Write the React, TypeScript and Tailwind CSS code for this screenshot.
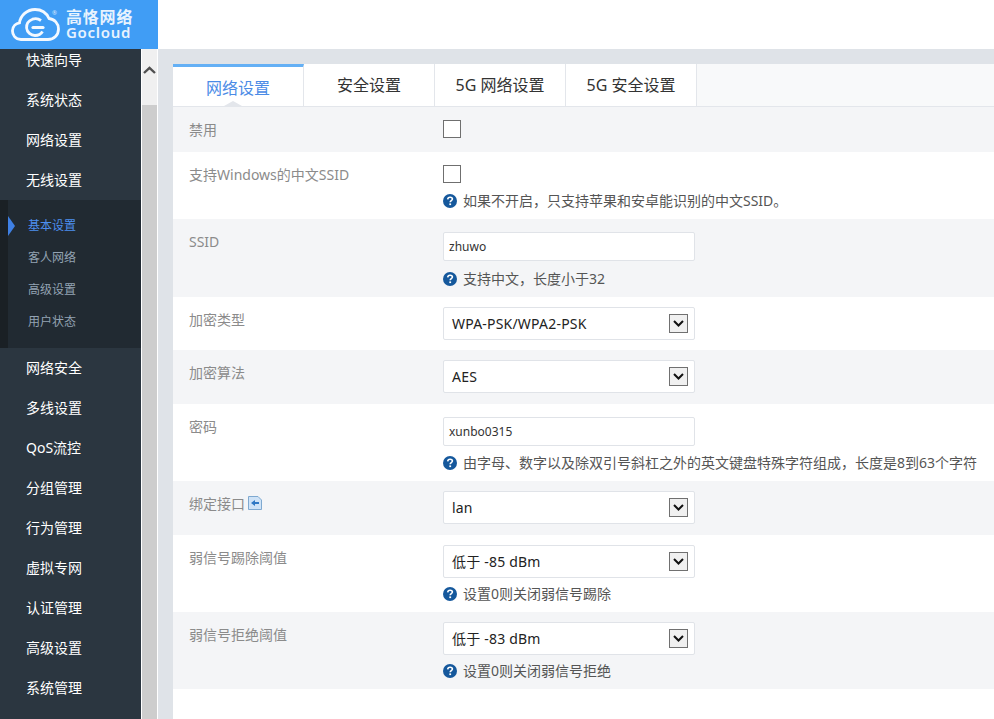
import type { ReactNode } from "react";

const font = "font-['Noto_Sans','Noto_Sans_CJK_SC',sans-serif]";

const topMenu = ["快速向导", "系统状态", "网络设置", "无线设置"];
const subMenu = ["基本设置", "客人网络", "高级设置", "用户状态"];
const bottomMenu = ["网络安全", "多线设置", "QoS流控", "分组管理", "行为管理", "虚拟专网", "认证管理", "高级设置", "系统管理"];
const tabs = ["网络设置", "安全设置", "5G 网络设置", "5G 安全设置"];

function Logo() {
  return (
    <div className="relative flex h-[49px] w-[158px] shrink-0 items-center bg-[#409df5] pl-[11px]">
      <svg width="49" height="33" viewBox="0 0 49 33" fill="none" stroke="#f4f9ff">
        <path d="M10 31.5 C4 31.5 1.3 26.5 1.5 22.5 C1.7 18 5 15.3 8.5 14.8 C9.5 7.5 16 1.5 24 1.5 C31.5 1.5 36 6 38 10.5 C43.5 11 47.5 15.5 47.5 21 C47.5 27 43 31.5 37 31.5 Z" strokeWidth="2.8" />
        <path d="M30 12.5 C27.5 10.7 24.5 10.2 21.5 11.2 C17.5 12.7 15.3 16 15.6 20 C16 24.5 20 27.5 24 27.5 C27.5 27.5 30.2 25.8 31.5 23.5" strokeWidth="2.8" />
        <path d="M22 19.5 H32" strokeWidth="3.2" strokeLinecap="round" />
      </svg>
      <span className="absolute top-[9px] left-[52px] text-[6px] leading-[8px] text-[#d5e8fc]">®</span>
      <div className="ml-[6px] flex flex-col text-[#e8f3fe]">
        <span className="text-[16px] leading-[16px] font-bold tracking-[0.8px]">高恪网络</span>
        <span className="text-[15px] leading-[15px] font-semibold tracking-[0.7px]">Gocloud</span>
      </div>
    </div>
  );
}

function MenuItem({ label }: { label: string }) {
  return <div className="flex h-10 items-center pb-[2px] pl-[26px] text-[14px] text-white">{label}</div>;
}

function Sidebar() {
  return (
    <div className="flex w-[158px] shrink-0 flex-col">
      <Logo />
      <div className="flex min-h-0 flex-1">
        <div className="w-[141px] overflow-hidden bg-[#2b3640]">
          <div className="-mt-[9px]">
            {topMenu.map((m) => (
              <MenuItem key={m} label={m} />
            ))}
            <div className="flex h-[148px] bg-[#212a32]">
              <div className="w-2 bg-[#1a2025]" />
              <div className="relative flex-1 py-[10px]">
                <div className="absolute top-[16px] left-0 h-0 w-0 border-y-[10px] border-l-[7px] border-y-transparent border-l-[#3f80e4]" />
                {subMenu.map((m, i) => (
                  <div key={m} className={`flex h-8 items-center pl-5 text-xs ${i === 0 ? "text-[#4d8fef]" : "text-[#93a3b3]"}`}>
                    {m}
                  </div>
                ))}
              </div>
            </div>
            {bottomMenu.map((m) => (
              <MenuItem key={m} label={m} />
            ))}
          </div>
        </div>
        <div className="ml-px flex w-[15px] flex-col bg-[#cdcdcd]">
          <div className="flex h-[56px] justify-center bg-[#f0f0f0] pt-[17px]">
            <svg width="13" height="8" viewBox="0 0 13 8" fill="none" stroke="#505050" strokeWidth="2.4">
              <path d="M1 7 L6.5 1.8 L12 7" />
            </svg>
          </div>
        </div>
        <div className="w-px bg-white" />
      </div>
    </div>
  );
}

function Help({ gap, children }: { gap: string; children: ReactNode }) {
  return (
    <div className={`flex h-[18px] items-center text-[14px] whitespace-nowrap text-[#555] ${gap}`}>
      <svg width="14" height="14" viewBox="0 0 14 14" className="mr-[6px] shrink-0">
        <circle cx="7" cy="7" r="7" fill="#15589c" />
        <path d="M4.7 5.4 C4.8 3.9 5.8 3.2 7.1 3.2 C8.4 3.2 9.4 4 9.4 5.1 C9.4 6.6 7.2 6.7 7.2 8.3" fill="none" stroke="white" strokeWidth="1.6" />
        <rect x="6.3" y="9.4" width="1.8" height="1.7" fill="white" />
      </svg>
      <span className="pb-[2px]">{children}</span>
    </div>
  );
}

function Checkbox() {
  return <div className="h-[18px] w-[18px] border border-[#6f6f6f] bg-white" />;
}

function TextInput({ value }: { value: string }) {
  return (
    <div className="flex h-[29px] w-[252px] items-center rounded-[2px] border border-[#e0e3e8] bg-white pl-[5px] text-xs text-[#333]">
      {value}
    </div>
  );
}

function Select({ value }: { value: string }) {
  return (
    <div className="flex h-[33px] w-[252px] items-center justify-between rounded-[2px] border border-[#e0e3e8] bg-white pr-[6px] pl-2 text-[14px] tracking-[0.2px] text-[#222]">
      <span>{value}</span>
      <div className="flex h-[19px] w-[19px] items-center justify-center border border-[#707070] bg-[#f0f0f0]">
        <svg width="11" height="7" viewBox="0 0 11 7" fill="none" stroke="#111" strokeWidth="2">
          <path d="M1 1 L5.5 5.5 L10 1" />
        </svg>
      </div>
    </div>
  );
}

function Row({ label, height, top, gray, extra, children }: { label: string; height: string; top: string; gray?: boolean; extra?: ReactNode; children: ReactNode }) {
  return (
    <div className={`flex pl-4 ${height} ${gray ? "bg-[#f4f5f7]" : "bg-white"}`}>
      <div className="mt-[13px] flex h-[18px] w-[254px] shrink-0 items-center text-[14px] text-[#8b8b8b]">
        {label}
        {extra}
      </div>
      <div className={`flex flex-col ${top}`}>{children}</div>
    </div>
  );
}

export default function App() {
  return (
    <div className={`flex h-screen w-full overflow-hidden bg-white ${font}`}>
      <Sidebar />
      <div className="flex min-w-0 flex-1 flex-col">
        <div className="h-[49px] shrink-0 bg-white" />
        <div className="flex min-h-0 flex-1 flex-col bg-[#dfe3e8] pt-[15px] pl-[15px]">
          <div className="flex h-[43px] shrink-0 border-b border-[#e3e6eb] bg-[#f8f9fa]">
            {tabs.map((t, i) => (
              <div
                key={t}
                className={`relative flex w-[131px] items-center justify-center border-r border-[#e3e6eb] bg-white text-[16px] ${
                  i === 0 ? "border-t-[3px] border-t-[#64b0f5] pt-[2px] text-[#4a8be6]" : "pb-[1px] text-[#333]"
                }`}
              >
                {t}
                {i === 0 && <div className="absolute bottom-0 left-[51px] h-0 w-0 border-x-[9px] border-b-[5px] border-x-transparent border-b-[#e3e6eb]" />}
              </div>
            ))}
          </div>
          <div className="flex-1 bg-white">
            <Row label="禁用" height="h-[45px]" top="pt-[13px]" gray>
              <Checkbox />
            </Row>
            <Row label="支持Windows的中文SSID" height="h-[67px]" top="pt-[13px]">
              <Checkbox />
              <Help gap="mt-[9px]">如果不开启，只支持苹果和安卓能识别的中文SSID。</Help>
            </Row>
            <Row label="SSID" height="h-[78px]" top="pt-[13px]" gray>
              <TextInput value="zhuwo" />
              <Help gap="mt-[9px]">支持中文，长度小于32</Help>
            </Row>
            <Row label="加密类型" height="h-[53px]" top="pt-[10px]">
              <Select value="WPA-PSK/WPA2-PSK" />
            </Row>
            <Row label="加密算法" height="h-[54px]" top="pt-[10px]" gray>
              <Select value="AES" />
            </Row>
            <Row label="密码" height="h-[77px]" top="pt-[13px]">
              <TextInput value="xunbo0315" />
              <Help gap="mt-[8px]">由字母、数字以及除双引号斜杠之外的英文键盘特殊字符组成，长度是8到63个字符</Help>
            </Row>
            <Row
              label="绑定接口"
              height="h-[54px]"
              top="pt-[10px]"
              gray
              extra={
                <svg width="14" height="14" viewBox="0 0 14 14" className="ml-[3px]">
                  <path d="M0.5 0.5 H10 L13.5 4 V13.5 H0.5 Z" fill="#cfe3f7" stroke="#7fa9d0" />
                  <path d="M3 7 L7 4 V6 H11 V8 H7 V10 Z" fill="#2f78c4" />
                </svg>
              }
            >
              <Select value="lan" />
            </Row>
            <Row label="弱信号踢除阈值" height="h-[77px]" top="pt-[10px]">
              <Select value="低于 -85 dBm" />
              <Help gap="mt-[7px]">设置0则关闭弱信号踢除</Help>
            </Row>
            <Row label="弱信号拒绝阈值" height="h-[77px]" top="pt-[10px]" gray>
              <Select value="低于 -83 dBm" />
              <Help gap="mt-[7px]">设置0则关闭弱信号拒绝</Help>
            </Row>
          </div>
        </div>
      </div>
    </div>
  );
}
